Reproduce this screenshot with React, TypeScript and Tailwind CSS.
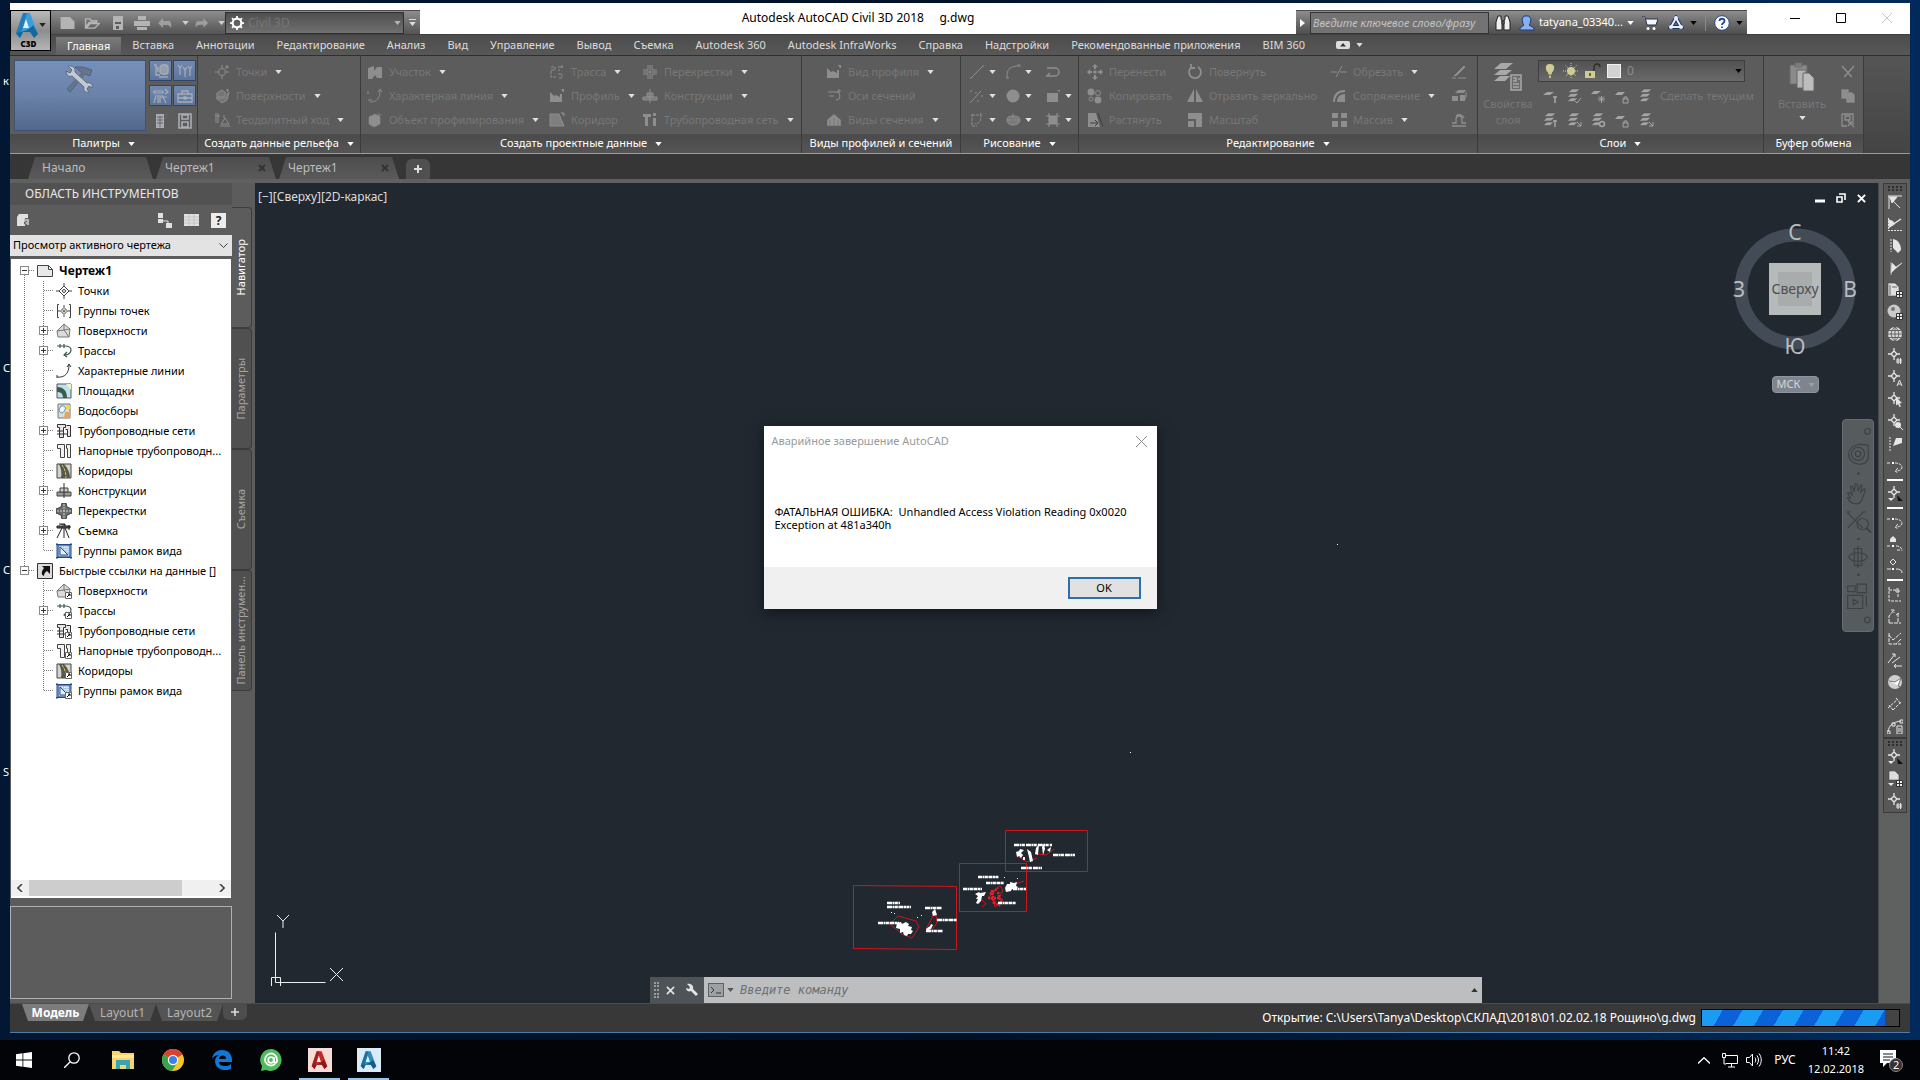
import type { ReactNode } from "react";
import clsx from "clsx";

/* ---------- icons ---------- */

const S = { fill: "none", stroke: "currentColor" } as const;

const point = (
  <g {...S}>
    <circle cx="8" cy="8" r="3.5" />
    <path d="M8 1v4M8 11v4M1 8h4M11 8h4" />
  </g>
);
const smallPoint = (
  <g {...S}>
    <path d="M7 3l3 3-3 3-3-3zM7 0v3M7 9v3M1 6h3M10 6h3" strokeWidth="1.3" />
  </g>
);
const sheets = (
  <path d="M6 1h8l-4 3.500H2zM5 5.500h8l-4 3.500H1zM5 10h7l-4 3.500H1z" fill="currentColor" stroke="#4f4f4f" strokeWidth=".5" />
);

const ICONS: Record<string, ReactNode> = {
  points: (
    <g>
      {point}
      <path d="M13 1v4M11 3h4" {...S} />
    </g>
  ),
  surface: <path d="M3 5l5-3 4 3-2 4H3zM2 10h9l4-6-2 8-5 3zM12 2h3M13.500 1v3" fill="currentColor" fillOpacity=".5" stroke="currentColor" />,
  traverse: <path d="M2 1v10M4 1v10M1 4h5M7 12l4-6 4 6zM6 14h10M10 6V3" {...S} />,
  parcel: <path d="M1 4l6-2v5l3-4h5v11h-5l-2-3-3 4H1z" fill="currentColor" />,
  feature: <path d="M1 3v3M3 14c7 0 10-4 10-11M11 4l2-3 2 3M1 12h4" {...S} />,
  grading: <path d="M2 5l6-3 5 3v7l-6 3-5-3zM12 1v5M10 3h5" fill="currentColor" stroke="currentColor" strokeWidth=".6" />,
  align: <path d="M2 3h4v3H2v7h6M9 3h2M9 6h2M9 10h4v4H9M13 1v4M11 3h4" {...S} strokeDasharray="3 1" />,
  profile: <path d="M1 4l4 4 2-1 4 2V6h2v8H1zM12 1h3v3h-1z" fill="currentColor" />,
  corridor: <path d="M1 2h9l5 12H1zM12 1h3v3" fill="currentColor" fillOpacity=".7" stroke="currentColor" />,
  cross: <path d="M6 1v5H1M10 1v5h5M6 15v-5H1M10 15v-5h5M8 1v14M1 8h14" {...S} />,
  assembly: <path d="M1 9h14v3H1zM8 1v14M5 5h6v4H5z" fill="currentColor" fillOpacity=".6" stroke="currentColor" />,
  pipenet: <path d="M1 2h8v3H6v9H3V5H1zM11 6h3v8h-3zM11 1h3v3h-3z" fill="currentColor" />,
  sampleLine: <path d="M2 4h8a4 4 0 0 1 0 8M3 8h5M13 1v4M11 3h4" {...S} />,
  sectionView: <path d="M1 8l7-6 7 6v6H1zM4 8v6M8 6v8M12 8v6" fill="currentColor" stroke="#6a6a6a" strokeWidth=".6" />,
  line: <path d="M2 14L14 2M1 14h2M13 2h2" {...S} />,
  xline: <path d="M1 15L12 3M1 3h2M6 5h2M12 8h2M8 13h2" {...S} />,
  pline: <path d="M3 2v12h5M3 3h9c0 6-2 9-6 9M12 1v3" {...S} strokeDasharray="3 1" />,
  arc: <path d="M2 14v-3C2 5 6 2 14 2M1 14h3M12 1h3v2" {...S} />,
  disc: <circle cx="8" cy="8" r="6.500" fill="currentColor" />,
  ellipse: <path d="M8 4c4 0 7 1 7 4s-3 5-7 5-6-2-6-5 2-4 6-4zM8 2v4M3 8h3M10 8h4" fill="currentColor" fillOpacity=".6" stroke="currentColor" />,
  pedit: <path d="M2 4h8a4 4 0 0 1 0 8H2l3-3" {...S} strokeWidth="1.500" />,
  rect: <path d="M2 5h11v9H2zM12 2h3v2" fill="currentColor" />,
  hatch: <path d="M4 1v14M12 1v14M1 4h14M1 12h14M5 5h6v6H5z" fill="currentColor" stroke="currentColor" strokeWidth="1.200" />,
  move: (
    <g fill="currentColor">
      <path d="M8 0l3 3H9v2H7V3H5zM8 16l3-3H9v-2H7v2H5zM0 8l3-3v2h2v2H3v2zM16 8l-3-3v2h-2v2h2v2z" />
      <path d="M6.500 6.500h3v3h-3z" />
    </g>
  ),
  rotate: <path d="M5 3a6 6 0 1 0 6 0M4 0v4h4" {...S} strokeWidth="1.800" />,
  trim: <path d="M0 8h6M9 8h7M5 13L11 2" {...S} />,
  copy: (
    <g fill="currentColor">
      <circle cx="4" cy="4" r="3.500" />
      <circle cx="11" cy="5" r="2.500" fill="none" stroke="currentColor" />
      <circle cx="4" cy="11" r="2" fill="none" stroke="currentColor" />
      <circle cx="11" cy="12" r="3.500" />
    </g>
  ),
  mirror: <path d="M7 1v13H0zM9 1l7 13H9z" fill="currentColor" />,
  fillet: <path d="M2 14C2 6 6 2 14 2v2C8 4 4 8 4 14zM6 14c0-5 3-8 8-8v8z" fill="currentColor" />,
  stretch: (
    <g>
      <path d="M1 1h8l4 14H1z" fill="currentColor" />
      <path d="M11 1l5 14M3 11h8M8 8l3 3-3 3" fill="none" stroke="#3f3f3f" />
    </g>
  ),
  scale: <path d="M1 1h14v14H9V7H1zM1 9h6v6H1z" fill="currentColor" />,
  array: <path d="M1 1h6v5H1zM10 1h6v5h-6zM1 9h6v6H1zM10 9h6v6h-6z" fill="currentColor" />,
  erase: <path d="M1 14h4M7 14h8M5 10l8-8 1 1-8 8-3 1z" fill="currentColor" stroke="currentColor" />,
  explode: (
    <g fill="currentColor">
      <path d="M4 5l3-3h8l-2 3zM1 8h6v5H1zM9 7h5v6H9z" />
      <path d="M14 6l2-3v6l-2 3z" opacity=".6" />
    </g>
  ),
  offset: <path d="M1 14h14M1 11h4V7a3 3 0 0 1 6 0v4h4M5 4a5 5 0 0 1 8 2" {...S} strokeWidth="1.300" />,
  shapes: (
    <g fill="none" stroke="currentColor" strokeWidth="1.300">
      <path d="M1 2h2v10h4M3 5h2v4" />
      <path d="M7 4c0-3 8-3 8 0v5c0 3-8 3-8 0z" fill="currentColor" fillOpacity=".7" />
      <path d="M6 14h9" />
    </g>
  ),
  people: <path d="M1 2l2 3 2-3M3 5v7M6 4l2 3 2-3M8 7v7M11 3l2 3 2-3M13 6v7" {...S} strokeWidth="1.200" />,
  survey: <path d="M1 3h9v2H1zM12 1l3 3-3 2M3 7l-2 8M5 7v8M7 7v8M9 7l4 8M7 9h7" {...S} strokeWidth="1.200" />,
  toolbox: <path d="M1 6h14v8H1zM5 6V3h6v3M1 10h14M7 9h2v2H7z" {...S} strokeWidth="1.300" />,
  panorama: (
    <g>
      <path d="M3 1h8v14H3z" fill="currentColor" />
      <path d="M11 1h3v4h-3M4 4h6M4 7h6M4 10h6M7 3v11" fill="none" stroke="#666" />
    </g>
  ),
  save: <path d="M2 1h12v14H2zM5 2h6v4H5zM5 9h6v5H5z" fill="none" stroke="currentColor" strokeWidth="1.600" />,
  layerPin: (
    <g>
      <path d="M5 4h7L8 7H1z" fill="currentColor" />
      <path d="M13 8v7M11 9h4" {...S} strokeWidth="1.600" />
    </g>
  ),
  layers: sheets,
  layersPin: (
    <g>
      {sheets}
      <path d="M13 8v7M11 9h4" {...S} strokeWidth="1.500" />
    </g>
  ),
  layerCheck: (
    <g>
      {sheets}
      <path d="M9 13l2 2 4-5" {...S} />
    </g>
  ),
  layerGear: (
    <g>
      <path d="M4 3h7L7 6H1z" fill="currentColor" />
      <path d="M8 11h7M11.500 8v7M9 8.500l5 5M14 8.500l-5 5" {...S} />
    </g>
  ),
  layersGear: (
    <g>
      {sheets}
      <circle cx="12" cy="12" r="2.500" {...S} strokeWidth="1.500" />
    </g>
  ),
  layerLock: (
    <g>
      <path d="M4 4h7L8 7H1z" fill="currentColor" />
      <path d="M9 11h5v4H9zM10 11V9h3v2" {...S} />
    </g>
  ),
  layerWalk: (
    <g>
      {sheets}
      <path d="M11 10l4 4M15 10v4h-4" {...S} />
    </g>
  ),
  cut: <path d="M2 2l8 9M14 2L6 11M6 11l-2 2M10 11l2 2" {...S} strokeWidth="1.400" />,
  clip: <path d="M1 1h8v3h3l3 3v8H6v-4H1z" fill="currentColor" stroke="#5a5a5a" strokeWidth=".6" />,
  matchProp: <path d="M2 2h11v8M2 2v12h5M5 4h5v4H5zM8 9l6 6M8 14l3-4 3 2" {...S} strokeWidth="1.300" />,

  /* tree */
  drawing: <path d="M0.500 2.500h11l4 4v7h-15zM11.500 2.500v4h4" fill="#e9e9e9" stroke="#444" />,
  tPoint: (
    <g fill="none" stroke="#444">
      <path d="M8 3l5 5-5 5-5-5z" />
      <circle cx="8" cy="8" r="1.500" />
      <path d="M8 0v3M8 13v3M0 8h3M13 8h3" />
    </g>
  ),
  tPointGroup: (
    <g fill="none" stroke="#444">
      <path d="M8 4.500l3.500 3.500L8 11.500 4.500 8z" />
      <circle cx="8" cy="8" r="1" />
      <path d="M8 2v2M8 12v2M3 1.500H1.500v13H3M13 1.500h1.500v13H13M2 8h2M12 8h2" />
    </g>
  ),
  tSurface: <path d="M1 8l7-7 6 5-1 8H2zM1 8l7-1 6-1M8 1v6M8 7l5 7" fill="#dcdcdc" stroke="#777" />,
  tAlign: <path d="M1 3h8c4 0 6 2 6 4s-2 5-6 5M4 1v4M8 1v4M11 9l-3 3 3 2" fill="none" stroke="#3d5a50" strokeWidth="1.200" />,
  tFeature: <path d="M1 14c8 1 12-4 12-12M11 4l2-3 2 3M1 12v3" fill="none" stroke="#333" />,
  tSite: (
    <g>
      <path d="M1 1h14v14H1z" fill="#bfe0ee" stroke="#555" />
      <path d="M1 4c7 0 10 4 10 11H7c0-4-2-6-6-6z" fill="#3c5c4a" />
      <path d="M10 1h5v6z" fill="#e8f4d0" />
    </g>
  ),
  tCatch: (
    <g>
      <path d="M2 1h12v14H2z" fill="#cfe3d7" stroke="#777" />
      <path d="M5 3c4-1 5 2 4 4s-3 4-5 2 0-4 1-6z" fill="#f3f7ff" stroke="#5b7ba5" />
      <path d="M9 9h5v6H8z" fill="#e7a35c" />
      <path d="M10 2h4v4h-4z" fill="#f1d64f" />
    </g>
  ),
  tPipe: (
    <g fill="#e6e6e6" stroke="#333">
      <path d="M1.500 1.500h8v3h-2v10h-4v-10h-2zM10.500 2.500h4v11h-3v-7h-2" />
      <path d="M1 8h7M1 11h10" />
    </g>
  ),
  tPressure: (
    <g fill="#f2f2f2" stroke="#444">
      <path d="M1.500 1.500h7v13h-4v-9h-3zM10.500 1.500h4v13h-3v-9h-1z" />
    </g>
  ),
  tCorridor: (
    <g>
      <path d="M1 1h14v14H1z" fill="#d2d2d0" stroke="#444" />
      <path d="M3 1h5c4 4 6 9 6 14H5C6 9 5 5 3 1z" fill="#55584a" />
      <path d="M6 2c3 4 4 8 4 13" fill="none" stroke="#e0cc45" strokeDasharray="3 1" />
    </g>
  ),
  tAssembly: (
    <g>
      <path d="M1 9h14v4H1z" fill="#999" stroke="#444" />
      <path d="M4 5h8v4H4z" fill="#ccc" stroke="#444" />
      <path d="M8 0v15" stroke="#333" />
    </g>
  ),
  tCross: (
    <g>
      <path d="M6 0h4l1 4 5 2v4l-5 2-1 4H6l-1-4-5-2V6l5-2z" fill="#6b706b" stroke="#3d403d" />
      <path d="M8 1v14M1 8h14" stroke="#c9ccc9" strokeDasharray="2 1" />
    </g>
  ),
  tSurvey: <path d="M1 3h13v2H1zM3 1h6v2M6 5L1 15M8 5v10M9 5l4 10M13 2v5" fill="#555" stroke="#222" />,
  tFrames: (
    <g>
      <path d="M2 2h12v12H2z" fill="#a9c6ea" stroke="#234a86" />
      <path d="M1 0v16M15 0v16M0 1.500h16M0 14.500h16" stroke="#234a86" />
      <path d="M4 4v8h8z" fill="#e6effb" stroke="#2f5594" />
      <path d="M6 4h6v6M9 4v3h3" fill="none" stroke="#fff" strokeDasharray="1 1" />
    </g>
  ),
  tLink: (
    <g>
      <path d="M0.500 0.500h15v15h-15z" fill="#dcdcdc" stroke="#333" />
      <path d="M5 3h8v8l-3-3c-2 1-3 3-3 5-3-1-3-4 0-8z" fill="#111" />
    </g>
  ),

  /* right-hand toolbar */
  rFan: <path d="M1 2h14M2 2v13M2 3l11 11M3 3h7L5 9z" fill="currentColor" stroke="currentColor" />,
  rFan2: (
    <g>
      <path d="M1 3l5 2 2 3-6 4z" fill="currentColor" />
      <path d="M2 11L14 3" {...S} strokeWidth="1.500" />
      <path d="M1 14.500h14M1.500 2v12" {...S} strokeDasharray="2 1" />
    </g>
  ),
  rSlice: (
    <g>
      <path d="M6 1c5 1 8 5 8 11l-3 3-5-5z" fill="currentColor" />
      <path d="M4 1v13" {...S} strokeDasharray="2 1" />
    </g>
  ),
  rBeam: <path d="M4 2v13M5 3l4 4 6-4-7 6-4 4z" fill="currentColor" stroke="currentColor" strokeWidth=".6" />,
  rDoc: (
    <g>
      <path d="M1 1h7l4 4v9H1z" fill="#dedede" stroke="#444" strokeWidth=".6" />
      <path d="M3 3v10M5 5h5" stroke="#666" />
      <path d="M9.500 9.500h6v6h-6zM12.500 9.500v6M9.500 12.500h6" fill="#eee" stroke="#333" />
    </g>
  ),
  rDisc: (
    <g>
      <circle cx="7" cy="7" r="6.500" fill="#c9c9c9" />
      <circle cx="6" cy="5" r="2" fill="#777" />
      <path d="M9.500 9.500h6v6h-6zM12.500 9.500v6M9.500 12.500h6" fill="#eee" stroke="#333" />
    </g>
  ),
  rGlobe: (
    <g>
      <circle cx="8" cy="8" r="7" fill="#d9d9d9" />
      <path d="M8 1v14M1 8h14M2 4.500h12M2 11.500h12M8 1C3 5 3 11 8 15M8 1c5 4 5 10 0 14" fill="none" stroke="#666" />
    </g>
  ),
  rNum: (
    <g>
      {smallPoint}
      <path d="M9 12h6M9 14h6M11 10v6M13.500 10v6" {...S} />
    </g>
  ),
  rLabel: (
    <g>
      {smallPoint}
      <path d="M10 16l2.500-6L15 16M11 14h3" {...S} />
    </g>
  ),
  rPick: (
    <g>
      {smallPoint}
      <path d="M9 5l6 6-2.500.5 1.500 3-1.500.5-1.500-3-2 1.500z" fill="currentColor" />
    </g>
  ),
  rZoom: (
    <g>
      {smallPoint}
      <circle cx="11" cy="11" r="3" fill="currentColor" />
      <path d="M13 13l3 3" {...S} />
    </g>
  ),
  rPen: (
    <g>
      <path d="M3 1v14" {...S} strokeDasharray="2 1" />
      <path d="M6 10l3-8h6v5z" fill="currentColor" />
    </g>
  ),
  rLoop: (
    <g>
      <path d="M0 5h4M8 5c9 0 9 8 1 8M11 10l-3 3 3 2" {...S} strokeDasharray="3 1" />
      <path d="M5 4h2v2H5z" fill="#fff" />
    </g>
  ),
  rSel: (
    <g>
      {smallPoint}
      <path d="M1 12h6l-3 3z" fill="currentColor" />
      <path d="M10 9l6 6h-5z" fill="#111" />
    </g>
  ),
  rDocSel: (
    <g>
      <path d="M2 0h6l4 4v5H2z" fill="#dedede" stroke="#444" strokeWidth=".6" />
      <path d="M1 12h6l-3 3z" fill="currentColor" />
      <path d="M9.500 9.500h6v6h-6zM12.500 9.500v6M9.500 12.500h6" fill="#eee" stroke="#333" />
    </g>
  ),
  rDotLoop: (
    <g>
      <path d="M3 6V3l3-3 3 3v3z" fill="currentColor" />
      <path d="M0 10h4M9 10c4 0 6 2 6 5M10 14h3" {...S} strokeDasharray="3 1" />
      <path d="M5 9h2v2H5z" fill="#fff" />
    </g>
  ),
  rPtLoop: (
    <g>
      <path d="M6 1l3 3-3 3-3-3zM0 11h4M9 11c4 0 6 1 6 4" {...S} />
      <path d="M5 10h2v2H5z" fill="#fff" />
    </g>
  ),
  rL1: <path d="M2 1v14h12M2 4h9M11 4v8M9 3h3v3H9z" {...S} strokeDasharray="3 1" />,
  rL2: <path d="M2 15V8l5-6M4 2h3v3M2 15h12M11 5v9M9 7l3-2" {...S} strokeDasharray="4 1" />,
  rL3: <path d="M2 3v11h12M2 5l4 5 8-7M14 9l-5 5" {...S} strokeDasharray="4 1" />,
  rL4: <path d="M1 11l7-9M5 2h3v3M5 11l8-6M7 14h8M9 12l-2 2 2 2" {...S} />,
  rBall: (
    <g>
      <circle cx="8" cy="8" r="7" fill="#cfcfcf" />
      <path d="M2 7l6 1 6-4-3 8 3 1" fill="#fff" stroke="#777" />
    </g>
  ),
  rSpan: <path d="M1 12l10-9M9 2l5 6M2 9l4 5M6 14l8-8" {...S} strokeDasharray="3 1" />,
  rCalc: (
    <g {...S}>
      <path d="M1 14C2 7 6 4 14 3M13 2h3v3h-3zM0 13h3v3H0zM5 5h3v3H5z" />
      <path d="M10 8h5v8h-5zM11 11h3M11 13h3" />
    </g>
  ),
};

function Ico({ name, className = "size-4" }: { name: string; className?: string }) {
  return (
    <svg viewBox="0 0 16 16" className={clsx("shrink-0", className)} aria-hidden="true">
      {ICONS[name]}
    </svg>
  );
}

function Caret({ className = "text-white" }: { className?: string }) {
  return (
    <svg viewBox="0 0 8 5" className={clsx("h-[4px] w-[7px] shrink-0", className)} aria-hidden="true">
      <path d="M0 0h8L4 5z" fill="currentColor" />
    </svg>
  );
}

/* ---------- title bar ---------- */

function CadLetter({ className, c1, c2 }: { className: string; c1: string; c2: string }) {
  return (
    <svg viewBox="0 0 24 26" className={className} aria-hidden="true">
      <path d="M8 0h7l8 21-4 4-3-6H8l-3 6-4-4z" fill={c1} />
      <path d="M11 6l3 9H8z" fill="#e8eef2" />
      <path d="M1 20c6-1 14-3 17-8l5 9-4 4-4-6H8l-3 6z" fill={c2} />
      <path d="M8 0h4L5 24l-4-4z" fill={c2} opacity=".6" />
    </svg>
  );
}

function QuickAccess() {
  return (
    <div className="flex h-6 items-center border-t border-[#4b4b4b] bg-linear-to-b from-[#8d8d8d] to-[#545454] pl-[9px] text-[#b4b4b4]">
      <button aria-label="Создать" className="w-6">
        <svg viewBox="0 0 16 14" className="h-[13px] w-4"><path d="M0 1h10l5 5v8H0z" fill="currentColor" /></svg>
      </button>
      <button aria-label="Открыть" className="w-[28px]">
        <svg viewBox="0 0 16 13" className="h-3 w-4"><path d="M1 11V2h5l1 2h6v2H5zM2 12l4-5h10l-5 5z" fill="none" stroke="currentColor" strokeWidth="1.500" /></svg>
      </button>
      <button aria-label="Сохранить" className="w-[22px]">
        <svg viewBox="0 0 12 14" className="h-3.5 w-3"><path d="M1 0h10v14H1z" fill="currentColor" /><path d="M3 6h6v2H3zM4 10h3v3H4z" fill="#5c5c5c" /></svg>
      </button>
      <button aria-label="Печать" className="w-6">
        <svg viewBox="0 0 16 14" className="h-3.5 w-4"><path d="M4 0h8v4H4zM0 5h16v5H0zM3 11h10v3H3z" fill="currentColor" /></svg>
      </button>
      <button aria-label="Отменить" className="flex w-[37px] items-center gap-[10px]">
        <svg viewBox="0 0 14 10" className="h-2.5 w-3.5"><path d="M0 5l5-5v3h7c1 2 2 4 1 7-1-2-2-3-4-3H5v3z" fill="currentColor" opacity=".7" /></svg>
        <Caret className="w-[5px] text-[#d0d0d0]" />
      </button>
      <button aria-label="Повторить" className="flex w-[30px] items-center gap-[10px]">
        <svg viewBox="0 0 14 10" className="h-2.5 w-3.5"><path d="M14 5L9 0v3H2C1 5 0 7 1 10c1-2 2-3 4-3h4v3z" fill="currentColor" opacity=".7" /></svg>
        <Caret className="w-[5px] text-[#d0d0d0]" />
      </button>
      <div className="relative flex h-[22px] w-[179px] items-center border border-[#2e2e2e] bg-linear-to-b from-[#4f4f4f] to-[#707070] pl-1">
        <svg viewBox="0 0 16 16" className="size-3.5 text-white">
          <circle cx="8" cy="8" r="5" fill="none" stroke="currentColor" strokeWidth="2.500" />
          <path d="M8 0v3M8 13v3M0 8h3M13 8h3M2.300 2.300l2 2M11.700 11.700l2 2M2.300 13.700l2-2M11.700 4.300l2-2" stroke="currentColor" strokeWidth="2" />
        </svg>
        <select aria-label="Рабочее пространство" className="h-full flex-1 appearance-none bg-transparent pl-1 text-xs leading-4 text-[#757575]">
          <option>Civil 3D</option>
        </select>
        <Caret className="pointer-events-none absolute right-[2px]" />
      </div>
      <button aria-label="Настройка панели" className="flex h-full w-4 flex-col items-center justify-center gap-0.5 text-[#dedede]">
        <span className="h-px w-[7px] bg-current" />
        <Caret className="text-[#dedede]" />
      </button>
    </div>
  );
}

function InfoCenter() {
  return (
    <div className="flex h-6 items-center border-t border-[#4b4b4b] bg-linear-to-b from-[#8d8d8d] to-[#4e4e4e]">
      <button aria-label="Свернуть поиск" className="flex w-3.5 justify-center text-white">
        <svg viewBox="0 0 5 8" className="h-2 w-[5px]"><path d="M0 0l5 4-5 4z" fill="currentColor" /></svg>
      </button>
      <input
        aria-label="Поиск"
        placeholder="Введите ключевое слово/фразу"
        className="h-[22px] w-[179px] border border-[#333] bg-[#737373] pl-0.5 text-[11px] italic placeholder:text-[#c4c4c4]"
      />
      <button aria-label="Найти" className="ml-1.5 w-6">
        <svg viewBox="0 0 16 16" className="size-4"><path d="M3 1h3v3l1 2v9H1V7zM13 1h-3v3L9 6v9h6V7zM7 6h2v3H7z" fill="#f0f0f0" stroke="#222" /></svg>
      </button>
      <button className="flex items-center gap-1 text-[11px] text-white">
        <svg viewBox="0 0 16 16" className="size-4"><path d="M5 1h5l2 3-1 5-1 1 5 3v2H1v-2l4-3-1-1-1-5z" fill="#86b0ee" stroke="#1c3f7c" /></svg>
        <span>tatyana_03340...</span>
        <Caret className="w-[5px]" />
      </button>
      <button aria-label="Магазин" className="ml-2 w-[26px]">
        <svg viewBox="0 0 16 16" className="size-4"><path d="M0 2h3l2 8h9l2-6H4" fill="#f2f6ff" stroke="#28324a" /><circle cx="6" cy="13.500" r="1.500" fill="#fff" /><circle cx="12" cy="13.500" r="1.500" fill="#fff" /></svg>
      </button>
      <button aria-label="Autodesk 360" className="flex items-center gap-1.5">
        <svg viewBox="0 0 16 16" className="size-4">
          <path d="M8 3l5 9H3z" fill="none" stroke="#1d3768" strokeWidth="4" />
          <path d="M8 3l5 9H3z" fill="none" stroke="#e8eefc" strokeWidth="2" />
          <circle cx="8" cy="3" r="2" fill="#e8eefc" /><circle cx="3" cy="12" r="2" fill="#e8eefc" /><circle cx="13" cy="12" r="2" fill="#e8eefc" />
        </svg>
        <Caret className="w-[5px]" />
      </button>
      <span className="mx-2 h-4 w-px bg-[#8a8a8a]" />
      <button aria-label="Справка" className="flex items-center gap-1.5 pr-1">
        <svg viewBox="0 0 16 16" className="size-4">
          <circle cx="8" cy="8" r="7.300" fill="#fff" stroke="#26488c" />
          <path d="M5.500 6c0-3 5-3 5 0 0 2-2.500 2-2.500 4M8 11.500v1.500" fill="none" stroke="#26488c" strokeWidth="1.800" />
        </svg>
        <Caret className="w-[5px]" />
      </button>
    </div>
  );
}

const MENU = [
  "Главная", "Вставка", "Аннотации", "Редактирование", "Анализ", "Вид", "Управление", "Вывод", "Съемка",
  "Autodesk 360", "Autodesk InfraWorks", "Справка", "Надстройки", "Рекомендованные приложения", "BIM 360",
];

function Header() {
  return (
    <header className="flex bg-[#535353]">
      <div className="w-[41px] shrink-0 border-t-[7px] border-white">
        <button className="flex h-[41px] w-full flex-col items-center border border-black bg-linear-to-b from-[#b9b9b9] via-[#8e8e8e] to-[#b5b5b5]">
          <span className="flex items-center">
            <CadLetter className="mt-0.5 h-[26px] w-6" c1="#3aa0dc" c2="#14679f" />
            <Caret className="w-[6px] text-[#222]" />
          </span>
          <span className="pr-1 text-[8px] leading-[9px] font-black text-black">C3D</span>
        </button>
      </div>
      <div className="flex min-w-0 flex-1 flex-col">
        <div className="flex h-[31px] items-end bg-white">
          <QuickAccess />
          <h1 className="flex-1 self-center pb-px text-center text-xs whitespace-pre text-black">
            Autodesk AutoCAD Civil 3D 2018{"     "}g.dwg
          </h1>
          <InfoCenter />
          <div className="flex h-full w-[163px] items-start justify-end">
            {[
              { label: "Свернуть", d: "M0 5.500h10", c: "text-black" },
              { label: "Развернуть", d: "M.5.5h9v9h-9z", c: "text-black" },
              { label: "Закрыть", d: "M0 0l10 10M10 0L0 10", c: "text-[#c9c9c9]" },
            ].map((b) => (
              <button key={b.label} aria-label={b.label} className={clsx("flex h-[29px] w-[46px] items-center justify-center", b.c)}>
                <svg viewBox="0 0 10 10" className="size-2.5"><path d={b.d} {...S} /></svg>
              </button>
            ))}
          </div>
        </div>
        <nav className="flex h-[21px] items-stretch border-t border-[#404040] bg-linear-to-b from-[#4c4c4c] to-[#585858] pl-[5px]">
          {MENU.map((m, i) => (
            <button
              key={m}
              className={clsx(
                "px-[11px] text-[11px] whitespace-nowrap",
                i === 0
                  ? "mt-0.5 bg-linear-to-b from-[#7b7b7b] to-[#5f5f5f] leading-[18px] text-white"
                  : "text-[#dcdcdc]"
              )}
            >
              {m}
            </button>
          ))}
          <button aria-label="Вид ленты" className="ml-5 flex items-center gap-1.5">
            <svg viewBox="0 0 14 8" className="h-2 w-3.5"><rect width="14" height="8" rx="2" fill="#ddd" /><path d="M4 5.500h6L7 2z" fill="#333" /></svg>
            <Caret className="w-[5px] text-[#ddd]" />
          </button>
        </nav>
      </div>
    </header>
  );
}

/* ---------- ribbon ---------- */

type Cmd = [icon: string, text?: string, caret?: boolean];

function Cmds({ items, className, gap = "gap-1.5" }: { items: Cmd[]; className: string; gap?: string }) {
  return (
    <div className={clsx("flex shrink-0 flex-col", className)}>
      {items.map(([icon, text, caret], i) => (
        <button key={i} aria-label={text ?? icon} className={clsx("flex h-6 items-center", gap)}>
          <Ico name={icon} className="size-4 text-[#8e8e8e]" />
          {text && <span className="text-[11px] whitespace-nowrap text-[#777]">{text}</span>}
          {caret && <Caret className={clsx("w-[5px] text-[#e0e0e0]", text && "ml-0.5")} />}
        </button>
      ))}
    </div>
  );
}

function Panel({ title, caret, className, children }: { title: string; caret?: boolean; className: string; children: ReactNode }) {
  return (
    <section className={clsx("flex shrink-0 flex-col border-r border-[#3b3b3b] bg-[#5c5c5c]", className)}>
      <div className="flex h-[78px] pt-1">{children}</div>
      <button className="flex h-[19px] items-center justify-center gap-2 bg-linear-to-b from-[#4a4a4a] to-[#555] text-[11px] whitespace-nowrap text-white">
        {title}
        {caret && <Caret />}
      </button>
    </section>
  );
}

const LAYER_TOOLS = [
  "layerPin", "layerCheck", "layerGear", "layerLock", "layers",
  "layersPin", "layerWalk", "layersGear", "layerLock", "layerWalk",
];

function Ribbon() {
  return (
    <div className="flex h-[99px] border-t border-b border-t-[#2f2f2f] border-b-[#9b9b9b] bg-linear-to-b from-[#555] to-[#444]">
      <Panel title="Палитры" caret className="w-[188px]">
        <button className="ml-1 flex h-[71px] w-[132px] flex-col items-center border border-[#3e5272] bg-linear-to-b from-[#7690bb] via-[#6b82a9] to-[#52688c] pt-1">
          <svg viewBox="0 0 30 28" className="h-7 w-[30px]">
            <path d="M10 2h8l9 3-2 6-5-2L5 27l-3-3L17 8z" fill="#66758d" stroke="#53637b" />
            <path d="M3 1l4 4-2 3-4-2c0 5 4 6 6 5l12 11c-1 4 2 6 5 5l-2-3 2-3 3 2c1-4-2-6-5-5L10 7c1-4-3-7-7-6z" fill="#c3c9d2" stroke="#5a6980" />
          </svg>
          <span className="mt-1 text-[11px] leading-4 text-[#6478a0]">Область инструментов</span>
        </button>
        <div className="ml-[3px] grid h-[71px] grid-cols-2 content-between gap-x-px">
          {["shapes", "people", "survey", "toolbox", "panorama", "save"].map((n, i) => (
            <button
              key={n}
              aria-label={n}
              className={clsx(
                "flex h-[21px] w-[23px] items-center justify-center text-[#a9adb3]",
                i < 4 && "border border-[#2f4467] bg-linear-to-b from-[#7188b0] to-[#5d749b]"
              )}
            >
              <Ico name={n} />
            </button>
          ))}
        </div>
      </Panel>
      <Panel title="Создать данные рельефа" caret className="w-[163px]">
        <Cmds className="ml-4" items={[["points", "Точки", true], ["surface", "Поверхности", true], ["traverse", "Теодолитный ход", true]]} />
      </Panel>
      <Panel title="Создать проектные данные" caret className="w-[441px]">
        <Cmds className="ml-1.5 w-[182px]" items={[["parcel", "Участок", true], ["feature", "Характерная линия", true], ["grading", "Объект профилирования", true]]} />
        <Cmds className="w-[93px]" items={[["align", "Трасса", true], ["profile", "Профиль", true], ["corridor", "Коридор"]]} />
        <Cmds className="" items={[["cross", "Перекрестки", true], ["assembly", "Конструкции", true], ["pipenet", "Трубопроводная сеть", true]]} />
      </Panel>
      <Panel title="Виды профилей и сечений" className="w-[159px]">
        <Cmds className="ml-6" items={[["profile", "Вид профиля", true], ["sampleLine", "Оси сечений"], ["sectionView", "Виды сечения", true]]} />
      </Panel>
      <Panel title="Рисование" caret className="w-[118px]">
        <Cmds gap="gap-1" className="ml-2 w-9" items={[["line", undefined, true], ["xline", undefined, true], ["pline", undefined, true]]} />
        <Cmds gap="gap-1" className="w-10" items={[["arc", undefined, true], ["disc", undefined, true], ["ellipse", undefined, true]]} />
        <Cmds gap="gap-1" className="" items={[["pedit"], ["rect", undefined, true], ["hatch", undefined, true]]} />
      </Panel>
      <Panel title="Редактирование" caret className="w-[399px]">
        <Cmds className="ml-2 w-[100px]" items={[["move", "Перенести"], ["copy", "Копировать"], ["stretch", "Растянуть"]]} />
        <Cmds className="w-36" items={[["rotate", "Повернуть"], ["mirror", "Отразить зеркально"], ["scale", "Масштаб"]]} />
        <Cmds className="w-[120px]" items={[["trim", "Обрезать", true], ["fillet", "Сопряжение", true], ["array", "Массив", true]]} />
        <Cmds className="" items={[["erase"], ["explode"], ["offset"]]} />
      </Panel>
      <Panel title="Слои" caret className="w-[286px]">
        <button className="flex w-[60px] flex-col items-center text-[11px] leading-4 text-[#777]">
          <svg viewBox="0 0 30 30" className="mt-0.5 mb-1 size-[30px] text-[#a8a8a8]">
            <path d="M8 1h12l-7 6H1zM7 8h12l-6 5H1zM7 14h10l-5 5H1z" fill="currentColor" />
            <path d="M18 13h10v15H18zM20 16h3v3h-3M25 17h2M20 22h6M20 25h6" fill="#6b6b6b" stroke="currentColor" strokeWidth="1.500" />
          </svg>
          <span className="w-[52px]">Свойства слоя</span>
        </button>
        <div className="flex flex-col">
          <div className="relative flex h-[22px] w-[207px] items-center gap-1.5 border border-[#3e3e3e] bg-linear-to-b from-[#525252] to-[#6a6a6a] pl-1">
            <svg viewBox="0 0 16 16" className="size-3.5"><path d="M8 0c7 0 5 8 2 10v2H6v-2C3 8 1 0 8 0zM7 13h2v3H7z" fill="#cfcb92" /></svg>
            <svg viewBox="0 0 16 16" className="size-4"><circle cx="8" cy="8" r="4" fill="#cfcb92" /><path d="M8 0v16M0 8h16M2.500 2.500l11 11M13.500 2.500l-11 11" stroke="#cfcb92" strokeDasharray="1 1" /></svg>
            <svg viewBox="0 0 16 16" className="size-4"><path d="M0 8h10v7H0z" fill="#cfcb92" /><path d="M9 8V4a3 3 0 0 1 6 0M5 10v3" fill="none" stroke="#2c2c24" strokeWidth="1.300" /></svg>
            <span className="size-3.5 border border-[#efefef] bg-[#d2d2d2]" />
            <select aria-label="Слой" className="h-full flex-1 appearance-none bg-transparent text-xs leading-4 text-[#8b8b8b]">
              <option>0</option>
            </select>
            <Caret className="pointer-events-none absolute right-[2px] w-2" />
          </div>
          <div className="mt-[2px] flex">
            <div className="ml-1 grid grid-cols-5 gap-x-2 text-[#a4a4a4]">
              {LAYER_TOOLS.map((n, i) => (
                <button key={i} aria-label={`${n} ${i + 1}`} className="flex h-6 items-center">
                  <Ico name={n} />
                </button>
              ))}
            </div>
            <button className="ml-1.5 h-6 text-[11px] whitespace-nowrap text-[#777]">Сделать текущим</button>
          </div>
        </div>
      </Panel>
      <Panel title="Буфер обмена" className="w-[100px]">
        <button className="flex w-[76px] flex-col items-center text-[11px] leading-4 text-[#777]">
          <svg viewBox="0 0 26 30" className="mt-0.5 mb-1 h-[30px] w-[26px] text-[#aaa]">
            <path d="M1 3h17v19H1zM6 1h7v4H6z" fill="#8b8b8b" stroke="#6b6b6b" />
            <path d="M8 8h9v18H8z" fill="#b5b5b5" stroke="#666" />
            <path d="M14 11h6l5 5v13H14z" fill="#bdbdbd" stroke="#666" />
          </svg>
          Вставить
          <Caret className="mt-1 w-[5px] text-[#e0e0e0]" />
        </button>
        <Cmds className="" items={[["cut"], ["clip"], ["matchProp"]]} />
      </Panel>
    </div>
  );
}

/* ---------- file tabs ---------- */

function FileTabs() {
  return (
    <div className="flex h-[25px] items-end gap-[3px] bg-[#363636] pl-[18px]">
      {["Начало", "Чертеж1", "Чертеж1"].map((t, i) => (
        <div
          key={i}
          className={clsx(
            "flex h-[22px] items-center justify-between rounded-t-md bg-linear-to-b from-[#4d4d4d] to-[#5a5a5a] text-xs text-[#bdbdbd] [clip-path:polygon(7px_0,calc(100%-7px)_0,100%_100%,0_100%)]",
            i === 0 ? "w-[125px] pl-[14px]" : "w-[120px] pr-2.5 pl-[9px]"
          )}
        >
          <button>{t}</button>
          {i > 0 && (
            <button aria-label="Закрыть вкладку">
              <svg viewBox="0 0 8 8" className="size-2"><path d="M1 1l6 6M7 1L1 7" stroke="#333" strokeWidth="2" /></svg>
            </button>
          )}
        </div>
      ))}
      <button aria-label="Новая вкладка" className="ml-1 flex h-5 w-6 items-center justify-center rounded-t-md bg-[#505050]">
        <svg viewBox="0 0 8 8" className="size-2"><path d="M4 0v8M0 4h8" stroke="#ddd" strokeWidth="2" /></svg>
      </button>
    </div>
  );
}

/* ---------- toolspace ---------- */

type Node = { t: string; icon: string; open?: "+" | "-"; link?: boolean };

const TREE: { root: Node; kids: Node[] }[] = [
  {
    root: { t: "Чертеж1", icon: "drawing", open: "-" },
    kids: [
      { t: "Точки", icon: "tPoint" },
      { t: "Группы точек", icon: "tPointGroup" },
      { t: "Поверхности", icon: "tSurface", open: "+" },
      { t: "Трассы", icon: "tAlign", open: "+" },
      { t: "Характерные линии", icon: "tFeature" },
      { t: "Площадки", icon: "tSite" },
      { t: "Водосборы", icon: "tCatch" },
      { t: "Трубопроводные сети", icon: "tPipe", open: "+" },
      { t: "Напорные трубопроводн...", icon: "tPressure" },
      { t: "Коридоры", icon: "tCorridor" },
      { t: "Конструкции", icon: "tAssembly", open: "+" },
      { t: "Перекрестки", icon: "tCross" },
      { t: "Съемка", icon: "tSurvey", open: "+" },
      { t: "Группы рамок вида", icon: "tFrames" },
    ],
  },
  {
    root: { t: "Быстрые ссылки на данные []", icon: "tLink", open: "-" },
    kids: [
      { t: "Поверхности", icon: "tSurface", link: true },
      { t: "Трассы", icon: "tAlign", open: "+", link: true },
      { t: "Трубопроводные сети", icon: "tPipe", link: true },
      { t: "Напорные трубопроводн...", icon: "tPressure", link: true },
      { t: "Коридоры", icon: "tCorridor", link: true },
      { t: "Группы рамок вида", icon: "tFrames", link: true },
    ],
  },
];

function Branch({ up = true, down = true, open }: { up?: boolean; down?: boolean; open?: "+" | "-" }) {
  return (
    <svg viewBox="0 0 19 20" className="h-5 w-[19px] shrink-0" aria-hidden="true">
      <g fill="none" stroke="#7c7c7c" strokeDasharray="1 1">
        {up && <path d="M6.500 0v10" />}
        {down && <path d="M6.500 10v10" />}
        <path d="M7 9.500h9" />
      </g>
      {open && (
        <>
          <rect x="2.500" y="5.500" width="8" height="8" fill="#fff" stroke="#8a8a8a" />
          <path d={open === "+" ? "M4 9.500h5M6.500 7v5" : "M4 9.500h5"} stroke="#333" />
        </>
      )}
    </svg>
  );
}

function Tree() {
  return (
    <ul className="flex-1 pt-0.5 pl-[7px] text-[11px] text-black">
      {TREE.map(({ root, kids }, g) => (
        <li key={root.t}>
          <button className="flex h-5 w-full items-center">
            <Branch up={g > 0} down={g === 0} open={root.open} />
            <Ico name={root.icon} />
            <span className={clsx("ml-1.5 whitespace-nowrap", g === 0 && "text-xs font-bold")}>{root.t}</span>
          </button>
          <ul>
            {kids.map((k, i) => (
              <li key={k.t} className="flex h-5 items-center">
                <svg viewBox="0 0 19 20" className="h-5 w-[19px] shrink-0" aria-hidden="true">
                  {g === 0 && <path d="M6.500 0v20" stroke="#7c7c7c" strokeDasharray="1 1" />}
                </svg>
                <Branch down={i < kids.length - 1} open={k.open} />
                <span className="relative flex shrink-0">
                  <Ico name={k.icon} />
                  {k.link && (
                    <svg viewBox="0 0 7 7" className="absolute right-0 bottom-0 size-[7px]"><path d="M.5.5h6v6h-6z" fill="#fff" stroke="#666" /><path d="M2 5l3-3M3 2h2v2" {...S} /></svg>
                  )}
                </span>
                <button className="ml-1.5 whitespace-nowrap">{k.t}</button>
              </li>
            ))}
          </ul>
        </li>
      ))}
    </ul>
  );
}

function Toolspace() {
  return (
    <aside className="flex w-[245px] shrink-0 bg-[#5c5c5c]">
      <div className="flex w-[222px] flex-col pb-1">
        <h2 className="flex h-[22px] items-center bg-[#525252] pl-[15px] text-xs text-[#e8e8e8]">ОБЛАСТЬ ИНСТРУМЕНТОВ</h2>
        <div className="flex h-[30px] items-center gap-3 px-1.5 text-[#e0e0e0]">
          <button aria-label="Элементы" className="mr-auto">
            <svg viewBox="0 0 14 14" className="size-3.5"><path d="M3 1h9v4H9v8H1V4z" fill="currentColor" /><path d="M8 6h5v6H8z" fill="#b9b9b9" /><path d="M11 8l-3 2 3 2" fill="none" stroke="#555" /></svg>
          </button>
          <button aria-label="Вид элементов">
            <svg viewBox="0 0 15 15" className="size-[15px]"><path d="M1 0h5v5H1zM1 6h5v4H1zM9 10h6v5H9z" fill="currentColor" /><path d="M6 8h5v3" fill="none" stroke="currentColor" /></svg>
          </button>
          <button aria-label="Панорама">
            <svg viewBox="0 0 15 14" className="h-3.5 w-[15px]"><path d="M0 1h15v12H0z" fill="currentColor" /><path d="M0 4h15M0 7h15M0 10h15M5 1v12M10 1v12" stroke="#b5b5b5" strokeWidth=".6" /></svg>
          </button>
          <button aria-label="Справка" className="size-[15px] bg-[#ececec] text-[12px] leading-[15px] font-bold text-[#222]">?</button>
        </div>
        <div className="relative flex items-center">
          <select aria-label="Вид" className="h-[21px] w-full appearance-none bg-[#e3e3e3] pl-[3px] text-[11px] text-black">
            <option>Просмотр активного чертежа</option>
          </select>
          <svg viewBox="0 0 9 6" className="pointer-events-none absolute right-1 h-1.5 w-[9px]"><path d="M.5.5l4 4 4-4" fill="none" stroke="#444" /></svg>
        </div>
        <div className="mt-[3px] mr-px ml-px flex flex-1 flex-col border-b-2 border-white bg-white">
          <Tree />
          <div className="flex h-4 items-center bg-[#f0f0f0] text-[#444]">
            <button aria-label="Влево" className="flex w-[18px] justify-center">
              <svg viewBox="0 0 6 8" className="h-2 w-1.5"><path d="M5 0L1 4l4 4" {...S} strokeWidth="1.600" /></svg>
            </button>
            <div className="h-full flex-1"><div className="h-full w-5/6 bg-[#cdcdcd]" /></div>
            <button aria-label="Вправо" className="flex w-[18px] justify-center">
              <svg viewBox="0 0 6 8" className="h-2 w-1.5"><path d="M1 0l4 4-4 4" {...S} strokeWidth="1.600" /></svg>
            </button>
          </div>
        </div>
        <div className="mt-2 h-[93px] border border-[#b0b0b0]" />
      </div>
      <div className="flex w-5 flex-col pt-6">
        {["Навигатор", "Параметры", "Съемка", "Панель инструмен..."].map((t, i) => (
          <button
            key={t}
            className={clsx(
              "flex h-[121px] w-5 items-center justify-center rounded-r-sm border border-l-0 border-[#3c3c3c] text-[11px]",
              i === 0 ? "bg-[#5c5c5c] text-white" : "bg-[#505050] text-[#a5a5a5]"
            )}
          >
            <span className="rotate-180 whitespace-nowrap [writing-mode:vertical-rl]">{t}</span>
          </button>
        ))}
      </div>
    </aside>
  );
}

/* ---------- model space ---------- */

function Drawing() {
  return (
    <svg viewBox="0 0 240 124" className="absolute top-[645px] left-[597px] h-[124px] w-[240px]" aria-hidden="true">
      <g fill="none" stroke="#d0141c">
        <path d="M1.500 57.500l103 1v63l-103-1z" />
        <path d="M107.500 35.500h67v48h-67z" />
        <path d="M153.500 2.500h82v41h-82z" />
        <path d="M38 96l8-8 18 5 3 6-7 11-10-4zM74 101l6-11 3-10 2 15-6 8z" />
        <path d="M124 66l10 10-4 3M140 64l8-6 3 4-4 8 4 2-8 7-2-7-4-2zM160 57l12-4" />
        <path d="M165 28l10 6 10-4M186 26l8 1 8-6" />
      </g>
      <path d="M138 66l8-6M140 62l2 14M142 74l6 4M136 70h12M146 64l3 10" stroke="#e8202c" strokeWidth="2.500" strokeDasharray="2 1" />
      <g stroke="#fff" fill="none" strokeWidth="2.500">
        <path d="M35 75h13M35 79h24M26 95h21M73 80h17M85 92h20M74 103h17" strokeDasharray="5 .5 2 .4 3 .6" />
        <path d="M126 49h21M134 55h18M111 61h19M161 61h13M146 75h18" strokeDasharray="4 .5 2 .4 3 .6" />
        <path d="M162 17h38M201 27h22M169 40h21" strokeDasharray="5 .5 2 .4 3 1" />
      </g>
      <g fill="#fff">
        <path d="M45 95l4-1 1 2 4-2 3 2-1 2 4 1-1 3 2 1-2 3-3 0-1 2-3-1-1-3-3 1 0-4-4-1z" />
        <path d="M80 84l3-3 1 3 1 3-4 1zM74 101l4-3 1-2 2 1-2 4-4 2z" />
        <path d="M123 66l4-2 1 1 6-1-2 4-2 0-1 5-3 3-2-1 2-4-2 0 2-3z" />
        <path d="M153 60l2-4 3 0 0-2 4 1 3-1-1 4 2 1-3 3-3-1-1 2-5 1z" />
        <path d="M164 24l3-1 1-2 4 1-3 3 2 2-2 3-2-2-2 1zM175 21l4 3 2 9-3 1-1-5zM184 20l3-4-1 11-3-1zM190 19l2-3 1 5-2 6zM195 22l4-3-1 5zM171 29h2v3h-2z" />
        <path d="M39 84h1v1h-1zM42 85h1v1h-1zM65 89h1v1h-1zM69 87h1v1h-1zM152 49h1v1h-1zM165 50h1v1h-1z" />
      </g>
    </svg>
  );
}

function ViewCube() {
  return (
    <div className="absolute top-[40px] right-[19px] flex w-[128px] flex-col items-center text-[#b9bcbf]">
      <div className="relative size-[128px]">
        <svg viewBox="0 0 128 128" className="absolute inset-0" aria-hidden="true">
          <circle cx="64" cy="66" r="54" fill="none" stroke="#434b56" strokeWidth="13" />
        </svg>
        <button className="absolute top-[40px] left-[38px] size-[52px] bg-[#b7babb] text-sm text-[#4c4f52]">
          <span className="flex size-full items-center justify-center border-[9px] border-[#b7babb] bg-[#a9acad]">Сверху</span>
        </button>
        <span className="absolute inset-x-0 -top-[3px] text-center text-[21px] leading-6">С</span>
        <span className="absolute top-[54px] left-0.5 text-[21px] leading-6">З</span>
        <span className="absolute top-[54px] right-0.5 text-[21px] leading-6">В</span>
        <span className="absolute inset-x-0 -bottom-[7px] text-center text-[21px] leading-6">Ю</span>
      </div>
      <button className="mt-[25px] flex h-[17px] w-[47px] items-center gap-2 rounded-sm border border-[#8f959d] bg-[#7f858e] pl-1 text-[11px] text-[#d3d6da]">
        МСК
        <Caret className="text-[#9aa0a8]" />
      </button>
    </div>
  );
}

function NavBar() {
  return (
    <div className="absolute top-[236px] right-[4px] flex h-[213px] w-[32px] justify-center rounded-sm border border-[#666c70] bg-[#565b5e]">
      <svg viewBox="0 0 32 213" className="h-[213px] w-[32px]" aria-hidden="true" fill="none" stroke="#3c4145" strokeWidth="1.200">
        <circle cx="26" cy="5" r="3" />
        <circle cx="26" cy="206" r="3" />
        <path d="M27 20v12c0 12-21 10-21-2s14-12 21-10z" />
        <circle cx="16" cy="29" r="7" />
        <circle cx="16" cy="29" r="3" />
        <path d="M15 50h3M15 120h3M15 158h3" strokeWidth="2" />
        <path d="M8 76l-3-5c1-2 3 0 5 2l-2-9c1-2 3 0 4 6l1-9c2-1 3 1 3 8l3-7c2 0 1 3 0 8l4-4c2 1-1 7-3 12-2 6-11 6-15-2z" />
        <path d="M5 92l16 16M21 92L5 108M4 91h4M20 91h4" />
        <circle cx="21" cy="104" r="6" />
        <path d="M25 108l5 5" strokeWidth="2" />
        <path d="M16 127v24M6 139c3-6 18-6 20 0-3 6-17 6-20 0zM12 130h8v18h-8z" />
        <path d="M5 170h8v6H5zM15 168h10v9H15zM5 180h16v14H5zM11 184l5 3-5 3zM25 180v12" />
      </svg>
    </div>
  );
}

function CommandLine() {
  return (
    <div className="absolute bottom-0 left-[395px] flex h-[26px] w-[832px] items-center bg-[#4e5357]">
      <span className="ml-1 h-4 w-[5px] border-x-2 border-dotted border-[#9a9a9a]" />
      <button aria-label="Закрыть" className="ml-px flex w-5 justify-center">
        <svg viewBox="0 0 10 10" className="size-[9px]"><path d="M1 1l8 8M9 1L1 9" stroke="#e4e4e4" strokeWidth="1.800" /></svg>
      </button>
      <button aria-label="Настройка" className="flex w-6 justify-center">
        <svg viewBox="0 0 14 14" className="size-3.5"><path d="M2 1l3 3-1 2-3-1c0 3 3 4 5 3l5 5 2-2-5-5c1-3-2-6-6-5z" fill="#e4e4e4" /></svg>
      </button>
      <label className="flex h-full flex-1 items-center bg-[#bcbebf] pl-1">
        <svg viewBox="0 0 16 14" className="h-3.5 w-4"><rect x=".5" y=".5" width="15" height="13" fill="#9ea1a3" stroke="#5e6264" /><path d="M3 4l3 3-3 3M8 10h5" fill="none" stroke="#333" /></svg>
        <Caret className="ml-[3px] w-[5px] text-[#555]" />
        <input
          aria-label="Командная строка"
          placeholder="Введите команду"
          className="ml-1.5 flex-1 bg-transparent font-['DejaVu_Sans_Mono',monospace] text-xs italic placeholder:text-[#6e7072]"
        />
        <Caret className="mr-1 rotate-180 text-[#333]" />
      </label>
    </div>
  );
}

function ModelSpace() {
  return (
    <main className="relative min-w-0 flex-1 overflow-hidden bg-[#212830]">
      <p className="pt-1 pl-[3px] text-xs leading-5 text-[#dadcde]">[−][Сверху][2D-каркас]</p>
      <div className="absolute top-2.5 right-3 flex items-center gap-[11px] text-white">
        <button aria-label="Свернуть вид"><svg viewBox="0 0 10 10" className="size-2.5"><path d="M0 8h10" stroke="currentColor" strokeWidth="3" /></svg></button>
        <button aria-label="Восстановить вид"><svg viewBox="0 0 10 10" className="size-2.5"><path d="M1 4h5v5H1zM3 1h6v6" {...S} strokeWidth="1.600" /></svg></button>
        <button aria-label="Закрыть вид"><svg viewBox="0 0 10 10" className="size-[9px]"><path d="M1 1l8 8M9 1L1 9" {...S} strokeWidth="2.200" /></svg></button>
      </div>
      <ViewCube />
      <NavBar />
      <Drawing />
      <span className="absolute top-[361px] left-[1082px] size-px bg-white" />
      <span className="absolute top-[569px] left-[875px] size-px bg-white" />
      <svg viewBox="0 0 76 76" className="absolute bottom-[17px] left-[14px] size-[76px]" fill="none" stroke="#eceeef" aria-hidden="true">
        <path d="M6.500 22.500v50h50M2.500 67.500h9v9h-9z" />
        <path d="M8 5l6 6 6-6M14 11v7M61 58l13 13M74 58L61 71" />
      </svg>
      <CommandLine />
    </main>
  );
}

const SIDE: string[][] = [
  ["rFan", "rFan2", "rSlice", "rBeam", "rDoc", "rDisc", "rGlobe", "rNum", "rLabel", "rPick", "rZoom", "rPen", "rLoop"],
  ["rSel"],
  ["rLoop", "rDotLoop", "rPtLoop"],
  ["rL1", "rL2", "rL3", "rL4", "rBall", "rSpan", "rCalc"],
];

function SideTools() {
  const grip = <span className="mt-0.5 h-[5px] w-3.5 border-y-2 border-dotted border-[#2d2d2d]" />;
  const btn = (n: string, i: number) => (
    <button key={i} aria-label={n} className="flex h-[22px] items-center justify-center">
      <Ico name={n} />
    </button>
  );
  return (
    <aside className="flex w-8 shrink-0 flex-col items-center border-l border-[#474b4b] bg-[#5f6161] text-[#e6e6e6]">
      <div className="flex w-6 flex-col items-center border border-[#3a3a3a] bg-[#585858]">
        {grip}
        {SIDE.map((g, i) => (
          <div key={i} className={clsx("flex flex-col", i > 0 && "border-t-2 border-white pt-0.5", i < 3 && "pb-0.5")}>
            {g.map(btn)}
          </div>
        ))}
      </div>
      <div className="flex w-6 flex-col items-center border border-[#3a3a3a] bg-[#585858]">
        {grip}
        {["rSel", "rDocSel", "rNum"].map(btn)}
      </div>
    </aside>
  );
}

/* ---------- status bar ---------- */

function StatusBar() {
  return (
    <footer className="flex h-[29px] items-start border-t border-[#4c4c4c] bg-[#383838]">
      <div className="flex pl-3">
        {["Модель", "Layout1", "Layout2"].map((t, i) => (
          <button
            key={t}
            className={clsx(
              "h-[17px] w-[67px] rounded-b-md text-xs leading-4 [clip-path:polygon(0_0,100%_0,calc(100%-6px)_100%,6px_100%)]",
              i === 0 ? "bg-[#7c7c7c] font-bold text-white" : "bg-[#545454] text-[#b5b5b5]"
            )}
          >
            {t}
          </button>
        ))}
        <button aria-label="Новый лист" className="flex h-4 w-6 items-center justify-center rounded-b-md bg-[#4d4d4d]">
          <svg viewBox="0 0 8 8" className="size-2"><path d="M4 0v8M0 4h8" stroke="#ddd" strokeWidth="1.600" /></svg>
        </button>
      </div>
      <div className="ml-auto flex h-[27px] items-center gap-[5px] pr-[10px]">
        <span className="text-xs whitespace-nowrap text-white">Открытие: C:\Users\Tanya\Desktop\СКЛАД\2018\01.02.02.18 Рощино\g.dwg</span>
        <div role="progressbar" aria-valuenow={93} aria-label="Открытие" className="h-[18px] w-[199px] border border-black bg-[#444]">
          <div className="h-full w-[93%] bg-[repeating-linear-gradient(120deg,#1a9cf5_0_18px,#0b62d8_18px_35px)]" />
        </div>
      </div>
    </footer>
  );
}

/* ---------- dialog ---------- */

function CrashDialog() {
  return (
    <div className="pointer-events-none absolute inset-0 flex items-center justify-center">
      <div role="alertdialog" aria-labelledby="crash-title" className="pointer-events-auto flex w-[393px] flex-col bg-white shadow-[0_3px_14px_rgba(0,0,0,0.5)]">
        <div className="flex h-[30px] items-center justify-between pr-2.5 pl-2">
          <h2 id="crash-title" className="text-[11px] text-[#9a9a9a]">Аварийное завершение AutoCAD</h2>
          <button aria-label="Закрыть">
            <svg viewBox="0 0 11 11" className="size-[11px]"><path d="M0 0l11 11M11 0L0 11" stroke="#8b8b8b" /></svg>
          </button>
        </div>
        <p className="h-[111px] pt-[49px] pl-[11px] text-[11px] leading-[13px] whitespace-pre text-black">
          ФАТАЛЬНАЯ ОШИБКА:{"  "}Unhandled Access Violation Reading 0x0020{"\n"}Exception at 481a340h
        </p>
        <div className="flex h-[42px] items-center justify-end bg-[#f0f0f0] pr-4">
          <button className="h-[22px] w-[73px] border-2 border-[#2a6fae] bg-[#e1e1e1] text-[11px] leading-4 text-black">OK</button>
        </div>
      </div>
    </div>
  );
}

/* ---------- taskbar ---------- */

function Taskbar() {
  return (
    <div className="flex h-10 items-center bg-[#020407] text-white">
      <button aria-label="Пуск" className="flex w-12 justify-center">
        <svg viewBox="0 0 16 16" className="size-4"><path d="M0 2.300L6.500 1.300v6.300H0zM7.300 1.200L16 0v7.600H7.300zM0 8.400h6.500v6.300L0 13.700zM7.300 8.400H16V16l-8.700-1.200z" fill="#fff" /></svg>
      </button>
      <button aria-label="Поиск" className="flex w-12 justify-center">
        <svg viewBox="0 0 16 16" className="size-4"><circle cx="10" cy="6" r="5.200" {...S} strokeWidth="1.300" /><path d="M6 10l-6 6" {...S} strokeWidth="1.300" /></svg>
      </button>
      <button aria-label="Проводник" className="flex w-[53px] justify-center">
        <svg viewBox="0 0 22 18" className="h-[18px] w-[22px]"><path d="M0 0h7l2 2h13v16H0z" fill="#f6d46c" /><path d="M4 9h14v9h-4v-4H8v4H4z" fill="#3aa2b4" /><path d="M0 4h22v3H0z" fill="#fbe6a0" /></svg>
      </button>
      <button aria-label="Chrome" className="flex w-12 justify-center">
        <svg viewBox="0 0 22 22" className="size-[22px]">
          <circle cx="11" cy="11" r="11" fill="#f6c52c" />
          <path d="M11 11L1.500 5.500A11 11 0 0 1 20.500 5.500z" fill="#d8432f" />
          <path d="M11 11L1.500 5.500A11 11 0 0 0 10 22l5-8z" fill="#35a351" />
          <circle cx="11" cy="11" r="5.200" fill="#fff" />
          <circle cx="11" cy="11" r="4" fill="#3f7fe8" />
        </svg>
      </button>
      <button aria-label="Edge" className="flex w-[50px] justify-center">
        <svg viewBox="0 0 20 20" className="size-5"><path d="M0 9C1 3 5 0 10 0c6 0 10 4 10 10v2H7c0 3 3 4 6 4 2 0 4 0 6-2v5c-7 3-16 0-16-8 0-3 2-5 4-6-3 0-5 1-7 4zm7 0h7c0-5-7-4-7 0z" fill="#0f77d6" /></svg>
      </button>
      <button aria-label="Агент" className="flex w-12 justify-center">
        <svg viewBox="0 0 22 22" className="size-[22px]">
          <path d="M11 0a11 11 0 1 1-5 21l-5 1 1-5A11 11 0 0 1 11 0z" fill="#4dbd5a" />
          <path d="M15 15a6 6 0 1 1 2-4c0 4-3 3-3 1V8" fill="none" stroke="#fff" strokeWidth="1.800" />
          <circle cx="11" cy="11" r="2.800" fill="none" stroke="#fff" strokeWidth="1.800" />
        </svg>
      </button>
      {[
        { n: "AutoCAD", c1: "#c22a2a", c2: "#8f1717", bg: "bg-[#f7dcd8]" },
        { n: "Civil 3D", c1: "#2e8cc0", c2: "#155d8a", bg: "bg-[#dcecf7]" },
      ].map((a) => (
        <button key={a.n} aria-label={a.n} className="mx-1 flex h-10 w-[41px] flex-col items-center justify-end border-b-2 border-[#9cc4ea]">
          <span className={clsx("mb-1.5 flex size-6 items-center justify-center", a.bg)}>
            <CadLetter className="h-[19px] w-[17px]" c1={a.c1} c2={a.c2} />
          </span>
        </button>
      ))}
      <div className="ml-auto flex h-full items-center pr-4">
        <button aria-label="Скрытые значки" className="w-6"><svg viewBox="0 0 12 7" className="h-[7px] w-3"><path d="M0 6.500L6 .7l6 5.800" {...S} strokeWidth="1.300" /></svg></button>
        <button aria-label="Сеть" className="w-6"><svg viewBox="0 0 16 16" className="size-4"><path d="M4 3.500h11.500v8H4M9.500 12v3M6 15h7M.5 1.500h3v4h-3zM2 6v6h2" {...S} /></svg></button>
        <button aria-label="Громкость" className="w-7"><svg viewBox="0 0 16 14" className="h-3.5 w-4"><path d="M0.500 4.500h3l3-3.500v12l-3-3.500h-3zM9 4.500c1 1.500 1 3.500 0 5M11 2.500c2 3 2 6 0 9M13 .5c3 4 3 9 0 13" {...S} /></svg></button>
        <button className="text-xs">РУС</button>
        <button className="ml-3 flex flex-col items-center text-[11px] leading-[18px]">
          <time>11:42</time>
          <time>12.02.2018</time>
        </button>
        <button aria-label="Уведомления" className="relative ml-4 h-5 w-6">
          <svg viewBox="0 0 24 22" className="h-[22px] w-6"><path d="M0 0h16v13H7l-4 4v-4H0z" fill="#fff" /><path d="M3 4h10M3 7h10M3 10h7" stroke="#111" /><circle cx="16" cy="15" r="6.500" fill="#333" stroke="#888" /></svg>
          <span className="absolute top-[7px] left-[13px] text-[11px] leading-4">2</span>
        </button>
      </div>
    </div>
  );
}

export default function App() {
  return (
    <div className="flex h-screen flex-col overflow-hidden bg-[#001a3c] font-['Noto_Sans','Open_Sans',sans-serif]">
      <div className="relative flex min-h-0 flex-1 bg-linear-to-r from-[#011733] via-[#001126] to-[#012a5c] pt-[3px] pr-[10px] pb-[7px] pl-[10px]">
        {/* labels of the desktop shortcuts that stick out behind the window */}
        <div className="absolute inset-y-0 left-[3px] w-[7px] overflow-hidden text-[11px] leading-4 text-white">
          <span className="absolute top-[73px]">к</span>
          <span className="absolute top-[360px]">С</span>
          <span className="absolute top-[562px]">С</span>
          <span className="absolute top-[764px]">S</span>
        </div>
        <div className="relative flex min-w-0 flex-1 flex-col border-b border-[#4f7ba8] bg-[#5c5c5c]">
          <Header />
          <Ribbon />
          <FileTabs />
          <div className="flex min-h-0 flex-1 border-t-4 border-[#5f6161]">
            <Toolspace />
            <ModelSpace />
            <SideTools />
          </div>
          <StatusBar />
          <CrashDialog />
        </div>
      </div>
      <Taskbar />
    </div>
  );
}
